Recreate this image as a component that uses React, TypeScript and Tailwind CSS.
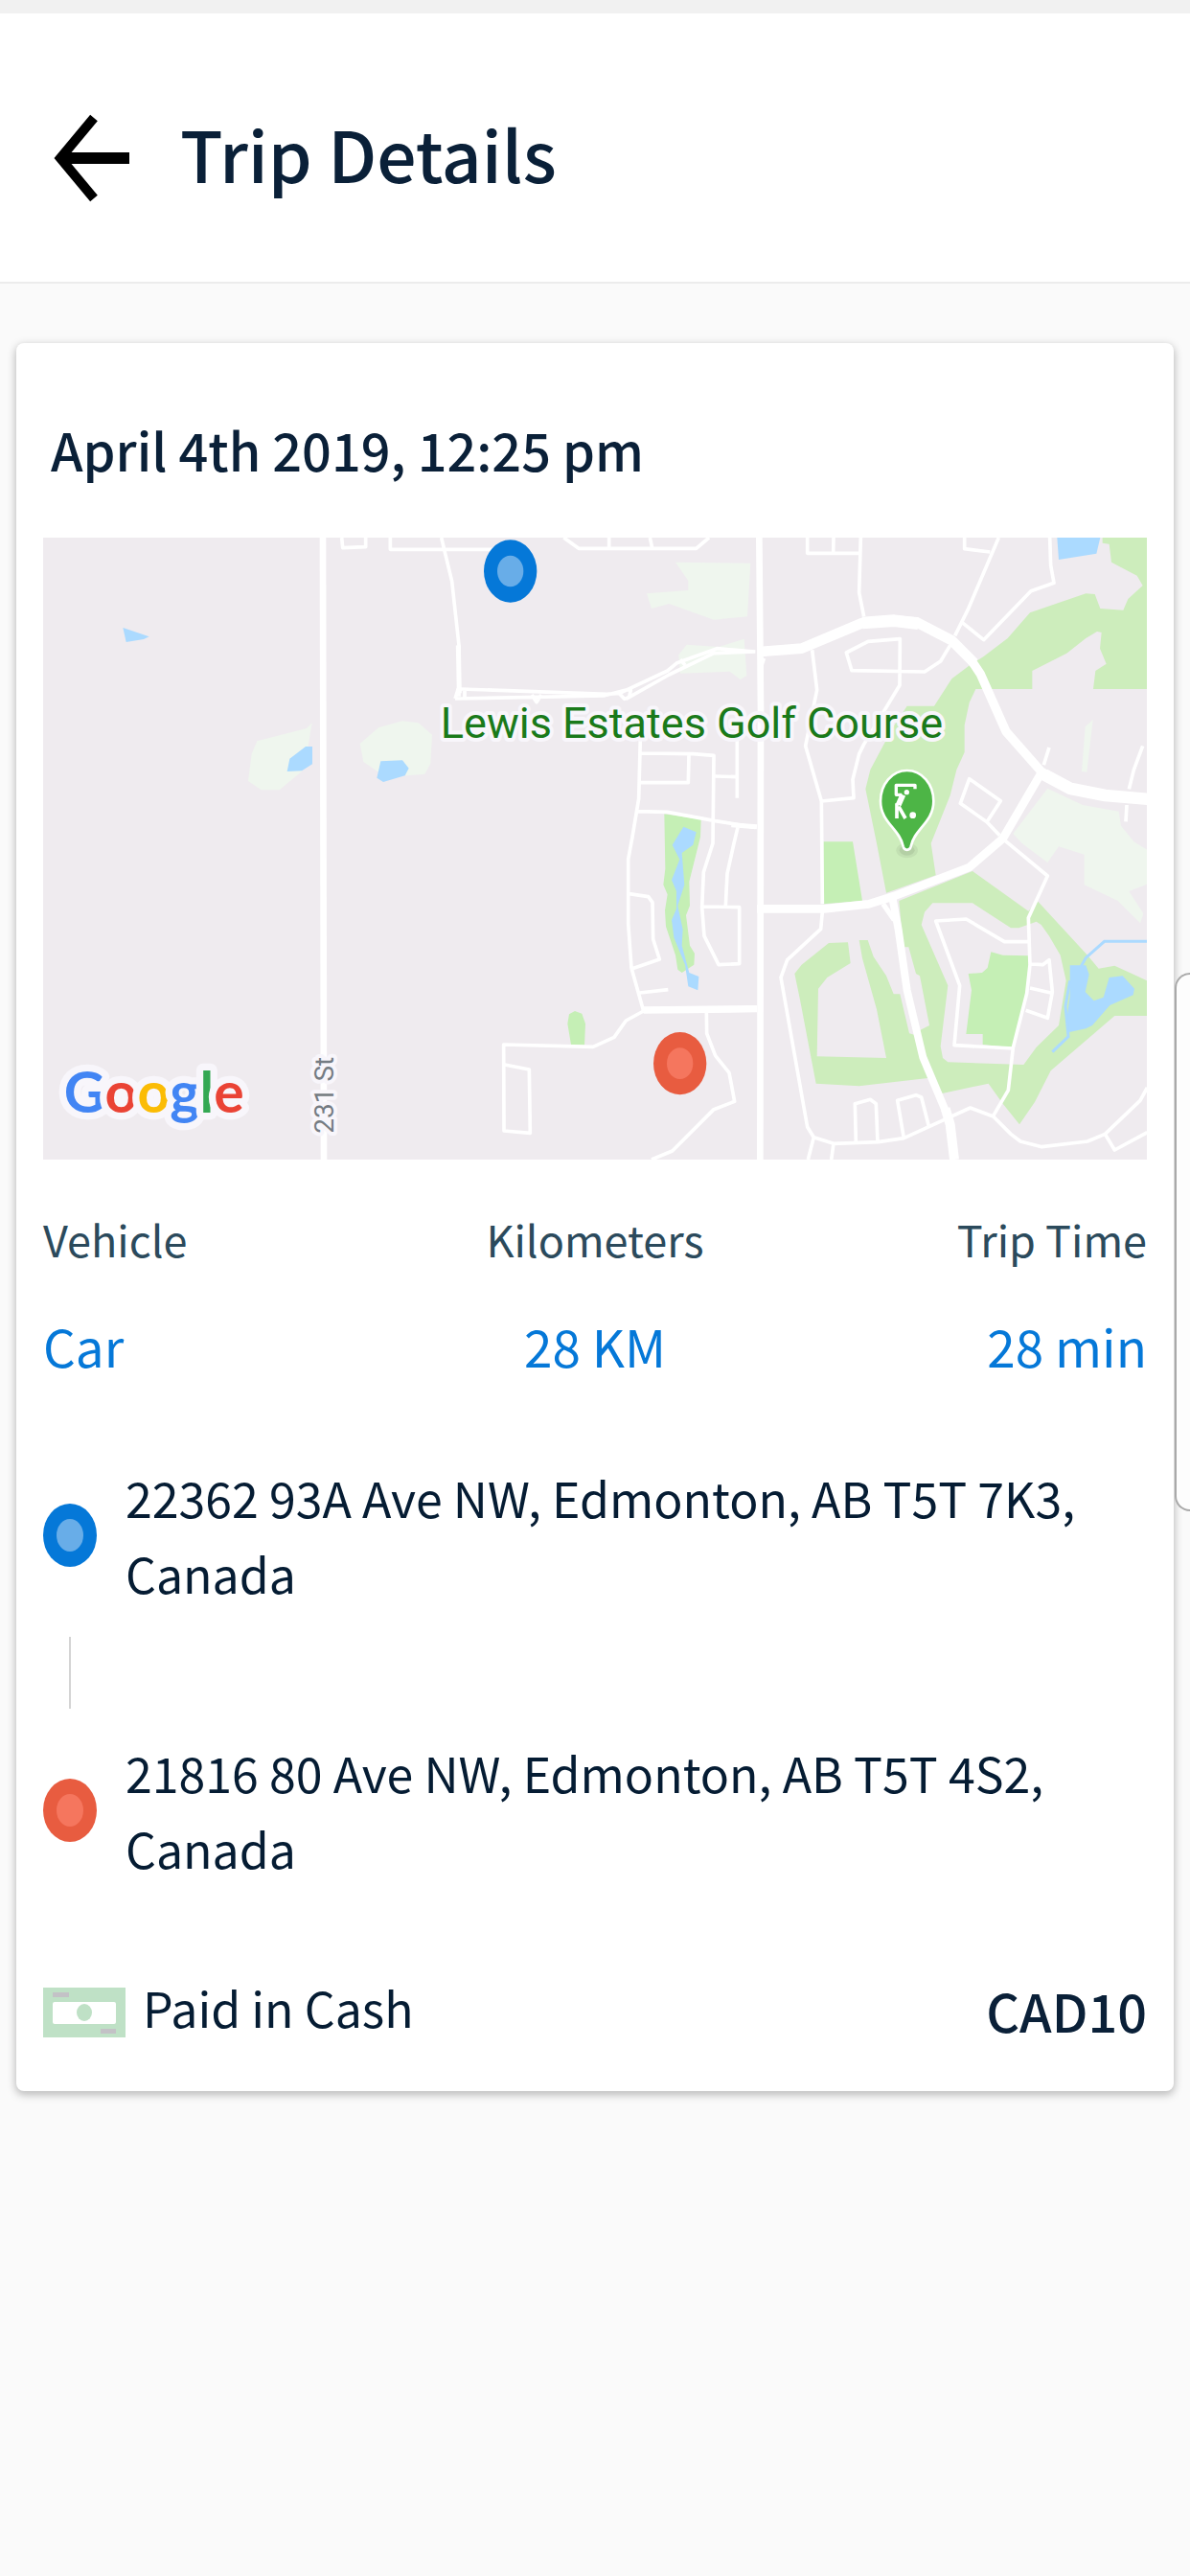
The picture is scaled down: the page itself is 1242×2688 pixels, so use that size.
const water = "#abdaff";
const park = "#cdedbc";
const parkDeep = "#c5efb5";
const meadow = "#eff6ee";

const FONT = "font-['Noto_Sans_CJK_SC','Noto_Sans',sans-serif]";

function TripMap() {
  return (
    <svg viewBox="135 63 3456 1947" className="block h-auto w-full" role="img" aria-label="Map of the trip">
      <rect x="135" y="63" width="3456" height="1947" fill="#efebef" />

      {/* western fields */}
      <path fill={meadow} d="M977 643 960 660 805 700 788 740 777 825 818 853 875 853 945 795 965 715Z" />
      <path fill={water} d="M957 717H978V772L945 793 899 795 907 755ZM385 345 467 373 450 381 395 390Z" />

      {/* central blocks */}
      <g transform="translate(1200 0)">
        <path
          fill={meadow}
          d="M915 140 1150 143 1140 310 1035 320 895 270 840 285 825 238 955 228 955 198ZM950 398 1050 405 1130 380 1138 495 1118 507 1085 482 930 488 925 430ZM-73 708-15 658 60 637 110 643 153 680 148 770 130 803 75 808-10 800-62 765Z"
        />
        <path fill={water} d="M-8 763 60 760 80 785 68 808 0 828-20 815Z" />
        <path
          fill={parkDeep}
          d="M880 928 995 945 993 1000 958 1140 960 1215 948 1245 960 1340 975 1365 973 1400 935 1425 922 1415 915 1370 885 1280 882 1230 890 1180 877 1150 883 1100ZM582 1555 600 1545 622 1553 633 1585 630 1652 588 1650 577 1585Z"
        />
        <path
          fill={water}
          d="M940 968 980 985 970 1025 935 1050 943 1150 922 1215 938 1290 935 1340 958 1425 988 1437 985 1480 955 1468 945 1400 910 1315 903 1260 918 1225 918 1170 903 1135 928 1070 905 1025Z"
        />
      </g>

      {/* golf course side */}
      <g transform="translate(2400 0)">
        <path
          fill={meadow}
          d="M880 848 990 900 1103 920 1110 965 1150 1015 1192 1040 1192 1148 1135 1170 1180 1240 1170 1270 1100 1200 995 1150 995 1055 915 1030 880 1080 800 1020 772 990ZM1022 633 1003 797 987 795 998 655Z"
        />
        <path
          fill={park}
          d="M1052 63H1192V537H1023L1030 480 1064 458 1044 410 1049 360 1035 357 1000 378 940 425 832 480V537H655L635 580 620 650V735L595 790 575 870 515 1020 530 1120 375 1175 345 1020 310 850 325 790 362 720 400 650 440 590H525L580 505 640 460 680 435 755 378 825 298 1000 238 1028 240 1045 285 1117 290 1132 255 1178 213 1160 182 1080 140 1073 83 1052 80Z"
        />
        <path
          fill={park}
          fillRule="evenodd"
          d="M415 1200 645 1107 820 1232 850 1202 1005 1370 1040 1412 1090 1403 1192 1450V1560H1090L890 1732 840 1830 792 1900 740 1835 695 1772 550 1803 490 1690 470 1610 510 1590 480 1435 468 1428 445 1345 428 1345ZM520 1207 495 1235 485 1275 568 1465 545 1655 552 1692 568 1705 805 1713 845 1658 915 1590 938 1450 920 1370 885 1310 860 1275 845 1265 790 1285 765 1285 645 1207Z"
        />
        <path
          fill={park}
          d="M195 1332 255 1330 263 1395 190 1440 162 1475 158 1687 375 1692 345 1540 300 1380 290 1323H317L335 1375 375 1435 398 1492H418L447 1615 465 1620 505 1755 290 1780 155 1772 105 1510 88 1428 110 1400Z"
        />
        <path
          fill={parkDeep}
          d="M178 1015H270L300 1200 178 1210ZM703 1360 740 1370 822 1372V1470L772 1660 677 1650V1617H625L642 1480 632 1428 675 1425 692 1410Z"
        />
        <path
          fill={water}
          d="M910 63H1045L1033 113 915 132ZM950 1402H1000L1010 1430 998 1485 1025 1513 1055 1502 1073 1440 1115 1435 1152 1475 1148 1495 1075 1527 1020 1590 1000 1600 945 1612 940 1570 950 1500Z"
        />
        <path fill="none" stroke={water} strokeWidth="9" d="M985 1405 1000 1378 1058 1327H1192M950 1450 936 1530 945 1625 895 1673" />
      </g>

      {/* streets */}
      <g fill="none" stroke="#fff" strokeWidth="11" strokeLinejoin="round">
        <path strokeWidth="20" d="M1011 63 1014 2010" />
        <path d="M1070 63 1073 95 1145 92V63" />
        <g transform="translate(1200 0)">
          <path strokeWidth="20" d="M1177 63 1182 600 1180 2010" />
          <path d="M22 63V100H350M182 63 215 200 237 400V560M565 63 612 97H980L1020 63M707 63V97M835 63 842 95" />
          <path strokeWidth="15" d="M235 400 238 550" />
          <path d="M243 537 700 553 740 550 890 480 920 455 1045 410 1165 420M225 567 690 558 760 540 775 540 770 562 755 568 740 552M760 568 895 492 1035 425 1165 420M465 555 480 578 495 555M235 535 225 567M255 537V565M930 445 945 462" />
          <path d="M805 690 800 880 780 1000 767 1070V1270L777 1410 815 1545M808 738 970 740 1035 745 1032 1020 1003 1110 998 1220 1005 1310 1050 1400 1115 1397V1220L998 1218M957 745 955 830H805M1040 810 1108 812M1108 690V878M795 920 890 922 1040 950 1165 970M1110 970 1098 1020 1077 1115 1072 1215M770 1178 830 1187 843 1205 845 1320 865 1383 780 1412M803 1488 892 1478" />
          <path strokeWidth="15" d="M1090 962 1170 968" />
          <path strokeWidth="22" d="M815 1542 1170 1538" />
          <path d="M815 1545 760 1575 723 1627 657 1657 377 1650 378 1920 460 1927 457 1728 380 1713M1012 1550 1013 1615 1040 1685 1083 1738 1100 1828 1035 1853 905 1983 840 2010" />
        </g>
        <g transform="translate(2400 0)">
          <path strokeWidth="32" d="M-20 420 110 410 300 330 400 322 470 328 580 385 650 455" />
          <path strokeWidth="28" d="M-20 420-5 418 110 410M640 445 670 490 750 670 860 795 950 850" />
          <path strokeWidth="38" d="M300 330 400 323 475 332M870 805 950 848 1060 870 1200 882" />
          <path strokeWidth="26" d="M860 800 740 1005 635 1095 400 1185 320 1210 180 1225-30 1225" />
          <path strokeWidth="24" d="M400 1180 395 1195 413 1290 440 1480 490 1690 570 1880" />
          <path strokeWidth="30" d="M560 1850 575 1900 588 2010" />
          <path d="M365 1210 400 1260M-10 440-20 470" strokeWidth="16" />
          <path d="M128 63V112H290M210 63 209 112M295 63 290 235 305 310M620 63V98L700 108M727 63 630 290 590 370M612 328 680 383 828 230 900 205 890 150 887 63" />
          <path d="M575 400 545 450 495 483 267 479 250 423 318 388 418 380 417 525 305 710 290 740 270 820 273 878 172 888M143 415 158 540 122 715 172 888 175 1210" />
          <path d="M175 1235 170 1288 65 1385 45 1440 128 1908 148 1940 210 1960 350 1955 430 1943 550 1888 638 1848 710 1875 765 1930 795 1953 862 1970 1005 1953 1060 1930 1170 1825 1192 1785M148 1940 130 2010M210 1960 203 2010M280 1955 277 1835 325 1822 343 1835 348 1955M430 1943 410 1825 468 1808 485 1815 508 1905" />
          <path d="M710 1873 757 1793 772 1660 815 1490 825 1400 820 1253 880 1122 745 1010M822 1328H745L625 1257 530 1263 605 1465 588 1652 772 1662M827 1398 865 1400 885 1385 895 1485 880 1567 812 1543M825 1473 890 1488M1060 1930 1090 1980 1192 1925" />
          <path d="M635 818 607 895 690 953 733 887ZM690 953 730 995M1178 715 1150 790 1135 850M1128 900 1125 952M885 720 868 775" />
        </g>
      </g>

      {/* pick-up and drop-off */}
      <g transform="translate(1200 0)">
        <ellipse cx="398" cy="168" rx="83" ry="98" fill="#0578d8" />
        <ellipse cx="398" cy="168" rx="41" ry="49" fill="#68ade8" />
        <ellipse cx="929" cy="1709" rx="83" ry="98" fill="#e85c40" />
        <ellipse cx="929" cy="1709" rx="41" ry="49" fill="#f5765e" />
      </g>

      {/* golf pin */}
      <g transform="translate(2400 0)">
        <ellipse cx="440" cy="1042" rx="34" ry="24" fill="#000" opacity=".05" />
        <ellipse cx="440" cy="1042" rx="24" ry="16" fill="#000" opacity=".07" />
        <path
          fill="#4db546"
          stroke="#fff"
          strokeWidth="8"
          strokeLinejoin="round"
          d="M440 792C393 792 357 835 357 888 357 955 418 975 428 1030 431 1044 449 1044 452 1030 462 975 523 955 523 888 523 835 487 792 440 792Z"
        />
        <path fill="none" stroke="#fff" strokeWidth="10" strokeLinejoin="round" d="M465 850V838H406V868H424" />
        <path fill="none" stroke="#fff" strokeWidth="18" strokeLinejoin="round" d="M427 868 413 900" />
        <path fill="none" stroke="#fff" strokeWidth="11" d="M408 895V942M414 905 435 942" />
        <circle cx="439" cy="860" r="8" fill="#fff" />
        <circle cx="458" cy="932" r="10" fill="#fff" />
      </g>

      {/* labels */}
      <g stroke="#f8f6fb" strokeLinejoin="round" style={{ paintOrder: "stroke" }}>
        <text x="2166" y="690" textAnchor="middle" fontSize="135" strokeWidth="24" fill="#1a7a1a" className="font-[Roboto,sans-serif]">
          Lewis Estates Golf Course
        </text>
        <text transform="translate(1045 1928) rotate(-90)" fontSize="84" strokeWidth="24" fill="#757c83" className="font-[Roboto,sans-serif]">
          231 St
        </text>
        <text x="200" y="1863" fontSize="177" strokeWidth="44" className="font-[Lato,sans-serif] font-bold">
          <tspan fill="#4285f4">G</tspan>
          <tspan fill="#ea4335">o</tspan>
          <tspan fill="#fbbc05">o</tspan>
          <tspan fill="#4285f4">g</tspan>
          <tspan fill="#34a853">l</tspan>
          <tspan fill="#ea4335">e</tspan>
        </text>
      </g>
    </svg>
  );
}

function StopDot({ outer, inner }: { outer: string; inner: string }) {
  return (
    <svg viewBox="0 0 56 66" className="h-[66px] w-14 shrink-0" aria-hidden="true">
      <ellipse cx="28" cy="33" rx="28" ry="33" fill={outer} />
      <ellipse cx="28" cy="33" rx="14" ry="17" fill={inner} />
    </svg>
  );
}

function Stop({ outer, inner, address }: { outer: string; inner: string; address: string }) {
  return (
    <li className="flex items-center gap-[30px]">
      <StopDot outer={outer} inner={inner} />
      <p className="text-[50px] leading-[79px] text-[#051c33]">{address}</p>
    </li>
  );
}

function CashIcon() {
  return (
    <svg viewBox="0 0 86 52" className="h-[52px] w-[86px] shrink-0" aria-hidden="true">
      <rect width="86" height="52" fill="#bfe1c6" />
      <rect x="10" y="15" width="66" height="23" rx="2" fill="#fff" />
      <ellipse cx="43" cy="26" rx="8" ry="9" fill="#bfe1c6" />
      <rect x="10" y="5" width="17" height="5" fill="#c3c2c6" />
      <rect x="60" y="43" width="16" height="5" fill="#c3c2c6" />
    </svg>
  );
}

const stats = [
  { label: "Vehicle", value: "Car", align: "text-left" },
  { label: "Kilometers", value: "28 KM", align: "text-center" },
  { label: "Trip Time", value: "28 min", align: "text-right" },
];

export default function App() {
  return (
    <div className={`relative min-h-screen overflow-x-hidden bg-[#fafafa] ${FONT}`}>
      <header className="flex h-[296px] items-center gap-[52px] border-t-14 border-b-2 border-t-[#f1f1f1] border-b-[#ececec] bg-white px-14 pt-[22px]">
        <button type="button" aria-label="Back" className="shrink-0">
          <svg viewBox="0 0 80 92" className="h-[92px] w-20" fill="none" stroke="#000" strokeWidth="12">
            <path d="M79 46H12" />
            <path strokeWidth="10" d="M42 4 7 46 42 88" />
          </svg>
        </button>
        <h1 className="pb-3 text-[73px] leading-[100px] font-medium text-[#0a2038]">Trip Details</h1>
      </header>

      <main className="px-[17px] pt-[62px]">
        <article className="rounded-lg bg-white px-7 pb-10 shadow-[0_3px_8px_1px_rgba(0,0,0,0.25)]">
          <h2 className="pt-[71px] pb-[52px] pl-2 text-[54px] leading-[80px] font-medium text-[#0a2038]">
            April 4th 2019, 12:25 pm
          </h2>
          <TripMap />

          <dl className="grid grid-cols-3 pt-12">
            {stats.map((s) => (
              <div key={s.label} className={`flex flex-col gap-9 ${s.align}`}>
                <dt className="text-[45px] leading-[70px] text-[#2b4a5c]">{s.label}</dt>
                <dd className="text-[53px] leading-[80px] text-[#0578d8]">{s.value}</dd>
              </div>
            ))}
          </dl>

          <ol className="pt-[79px]">
            <Stop outer="#0578d8" inner="#68ade8" address="22362 93A Ave NW, Edmonton, AB T5T 7K3, Canada" />
            <li aria-hidden="true" className="my-[27px] ml-[27px] h-[75px] w-0.5 bg-[#d4d4d4]" />
            <Stop outer="#e85c40" inner="#f5765e" address="21816 80 Ave NW, Edmonton, AB T5T 4S2, Canada" />
          </ol>

          <footer className="flex items-center justify-between pt-[90px]">
            <div className="flex items-center gap-[18px]">
              <CashIcon />
              <p className="pb-3 text-[50px] leading-[72px] text-[#051c33]">Paid in Cash</p>
            </div>
            <strong className="pb-1 text-[54px] leading-[80px] font-medium text-[#0a2038]">CAD10</strong>
          </footer>
        </article>
      </main>

      {/* edge panel handle */}
      <button
        type="button"
        aria-label="Open edge panel"
        className="absolute top-[1015px] right-0 h-[562px] w-4 rounded-l-[22px] border-y-2 border-l-2 border-[#a9a9a9] bg-[#fdfdfd]"
      />
    </div>
  );
}
